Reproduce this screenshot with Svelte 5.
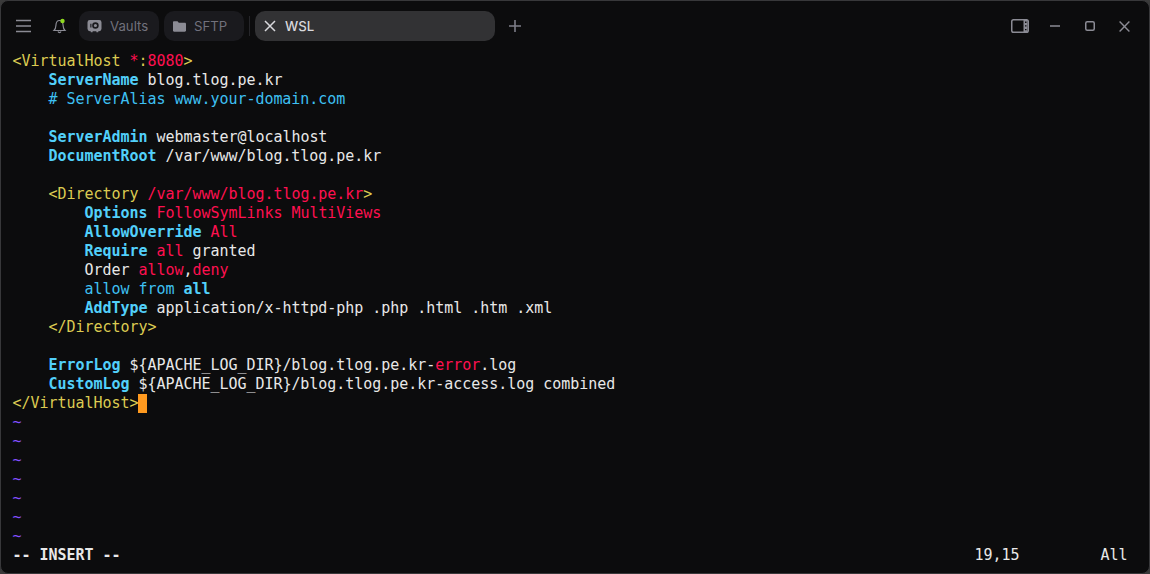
<script>
    const W = "#e8e8e8";
    const Y = "#dccb52";
    const R = "#ff1050";
    const C = "#52d0fa";
    const B = "#3ec0f2";
    const P = "#8450ff";

    // each line is a list of [text, colour, bold]
    const lines = [
        [["<", Y], ["VirtualHost ", Y], ["*", R], [":", Y], ["8080", R], [">", Y]],
        [["    "], ["ServerName", C, true], [" blog.tlog.pe.kr", W]],
        [["    "], ["# ServerAlias www.your-domain.com", B]],
        [],
        [["    "], ["ServerAdmin", C, true], [" webmaster@localhost", W]],
        [["    "], ["DocumentRoot", C, true], [" /var/www/blog.tlog.pe.kr", W]],
        [],
        [["    "], ["<Directory ", Y], ["/var/www/blog.tlog.pe.kr", R], [">", Y]],
        [["        "], ["Options", C, true], [" "], ["FollowSymLinks MultiViews", R]],
        [["        "], ["AllowOverride", C, true], [" "], ["All", R]],
        [["        "], ["Require", C, true], [" "], ["all", R], [" granted", W]],
        [["        "], ["Order ", W], ["allow", R], [",", W], ["deny", R]],
        [["        "], ["allow from ", B], ["all", C, true]],
        [["        "], ["AddType", C, true], [" application/x-httpd-php .php .html .htm .xml", W]],
        [["    "], ["</Directory>", Y]],
        [],
        [["    "], ["ErrorLog", C, true], [" ${APACHE_LOG_DIR}/blog.tlog.pe.kr-", W], ["error", R], [".log", W]],
        [["    "], ["CustomLog", C, true], [" ${APACHE_LOG_DIR}/blog.tlog.pe.kr-access.log combined", W]],
    ];
    const tildes = [1, 2, 3, 4, 5, 6, 7];
</script>

<div class="window">
    <header class="tabbar">
        <button class="icon menu" aria-label="menu">
            <svg width="16" height="14" viewBox="0 0 16 14"><path d="M0 1.5h15M0 7h15M0 12.500h15" stroke="#8b8b94" stroke-width="1.6" /></svg>
        </button>
        <button class="icon bell" aria-label="notifications">
            <svg width="16" height="18" viewBox="0 0 16 18">
                <path d="M2 13.500c1.400-1.400 1.800-2.800 1.900-5C4 5.500 5.500 3.500 7.500 3.500s3.500 2 3.600 5c.1 2.200.5 3.600 1.900 5z" fill="none" stroke="#8b8b94" stroke-width="1.200" />
                <path d="M6 14.500a1.600 1.600 0 0 0 3 0" fill="none" stroke="#8b8b94" stroke-width="1.200" />
                <circle cx="10.500" cy="4" r="2.200" fill="#8ed81f" />
            </svg>
        </button>
        <div class="tab">
            <svg width="15" height="14" viewBox="0 0 16 15">
                <path fill-rule="evenodd" d="M3 1h10a2.500 2.500 0 0 1 2.500 2.500v7A2.500 2.500 0 0 1 13 13h-1v1.200h-2V13H6v1.200H4V13H3A2.500 2.500 0 0 1 .5 10.500v-7A2.500 2.500 0 0 1 3 1zm6 2.500a3.500 3.500 0 1 0 0 7 3.500 3.500 0 0 0 0-7zm0 1.800a1.700 1.700 0 1 1 0 3.400 1.700 1.700 0 0 1 0-3.400zM3.500 5v4h1.200V5z" fill="#8b8b94" />
            </svg>
            <span>Vaults</span>
        </div>
        <div class="tab">
            <svg width="13" height="11" viewBox="0 0 15 12"><path d="M0 1.300C0 .6.500 0 1.200 0h4l1.500 1.700h6.900c.8 0 1.400.6 1.400 1.300v7.700c0 .7-.6 1.300-1.400 1.300H1.200C.5 12 0 11.400 0 10.700z" fill="#8b8b94" /></svg>
            <span>SFTP</span>
        </div>
        <i class="divider"></i>
        <div class="tab active">
            <svg width="12" height="12" viewBox="0 0 12 12"><path d="M1 1l10 10M11 1L1 11" stroke="#d8d8dc" stroke-width="1.500" /></svg>
            <span>WSL</span>
        </div>
        <button class="icon plus" aria-label="new tab">
            <svg width="12" height="12" viewBox="0 0 12 12"><path d="M6 0v12M0 6h12" stroke="#7d7d88" stroke-width="1.600" /></svg>
        </button>
        <div class="controls">
            <svg width="18" height="14" viewBox="0 0 18 14">
                <rect x=".75" y=".75" width="16.500" height="12.500" rx="1.800" fill="none" stroke="#8b8b94" stroke-width="1.500" />
                <path d="M12.500 1h4v12h-4z" fill="#8b8b94" />
                <path d="M14 3.200h1.500M14 6.900h1.500M14 10.600h1.500" stroke="#0c0c0d" stroke-width="1.400" />
            </svg>
            <svg class="min" width="10" height="2" viewBox="0 0 10 2"><path d="M0 1h10" stroke="#8b8b94" stroke-width="1.400" /></svg>
            <svg class="max" width="10" height="10" viewBox="0 0 10 10"><rect x=".75" y=".75" width="8.500" height="8.500" rx="1.500" fill="none" stroke="#8b8b94" stroke-width="1.500" /></svg>
            <svg class="close" width="11" height="11" viewBox="0 0 11 11"><path d="M.6.600l9.800 9.800M10.400.600L.6 10.400" stroke="#8b8b94" stroke-width="1.400" /></svg>
        </div>
    </header>

    <main class="term">
        {#each lines as line}
            <div class="row">{#each line as [text, color, bold]}<span class:bold={bold} style:color={color}>{text}</span>{/each}</div>
        {/each}
        <div class="row"><span style:color={Y}>&lt;/VirtualHost&gt;</span><span class="cursor"> </span></div>
        {#each tildes as t}
            <div class="row"><span style:color={P}>~</span></div>
        {/each}
        <div class="row status">
            <span class="bold mode">-- INSERT --</span>
            <span class="pos">19,15</span>
            <span class="all">All</span>
        </div>
    </main>
</div>

<style>
    :global(body) {
        background: #3a3a3a;
        overflow: hidden;
    }
    .window {
        width: 1150px;
        height: 574px;
        box-sizing: border-box;
        background: #0c0c0d;
        border: 1px solid #38383a;
        border-radius: 8px;
        overflow: hidden;
    }
    .tabbar {
        height: 50px;
        box-sizing: border-box;
        padding: 10px 0 0 15px;
        display: flex;
        align-items: flex-start;
        font-family: "Inter", "Noto Sans", sans-serif;
        font-size: 13.2px;
    }
    button.icon {
        all: unset;
        display: flex;
        align-items: center;
        height: 30px;
    }
    button.bell {
        margin-left: 20px;
    }
    .tab {
        height: 30px;
        width: 80px;
        box-sizing: border-box;
        margin-left: 5px;
        padding-left: 8px;
        display: flex;
        align-items: center;
        gap: 8px;
        background: #1a1a1e;
        border-radius: 10px;
        color: #71717c;
    }
    .bell + .tab {
        margin-left: 11px;
    }
    .tab:nth-of-type(2) {
        padding-left: 9px;
    }
    .divider {
        width: 1px;
        height: 20px;
        margin: 5px 5px 0 5px;
        background: #26262a;
    }
    .tab.active {
        width: 240px;
        margin-left: 0;
        padding-left: 9px;
        gap: 9px;
        background: #323234;
        color: #d8d8dc;
        font-weight: 500;
    }
    button.plus {
        margin-left: 14px;
    }
    .controls {
        margin-left: auto;
        height: 30px;
        padding-right: 19px;
        display: flex;
        align-items: center;
    }
    .min {
        margin-left: 21px;
    }
    .max {
        margin-left: 25px;
    }
    .close {
        margin-left: 24px;
    }
    .term {
        padding: 1px 0 0 11.5px;
        font-family: "DejaVu Sans Mono", "Liberation Mono", monospace;
        font-size: 15px;
        letter-spacing: -0.035px;
        color: #e8e8e8;
    }
    .row {
        height: 19px;
        line-height: 19px;
        white-space: pre;
        position: relative;
    }
    .bold {
        font-weight: 700;
    }
    .cursor {
        display: inline-block;
        width: 9px;
        height: 19px;
        background: #ff9a1f;
        vertical-align: top;
    }
    .pos,
    .all {
        position: absolute;
        top: 0;
    }
    .pos {
        left: 962px;
    }
    .all {
        left: 1088px;
    }
</style>
